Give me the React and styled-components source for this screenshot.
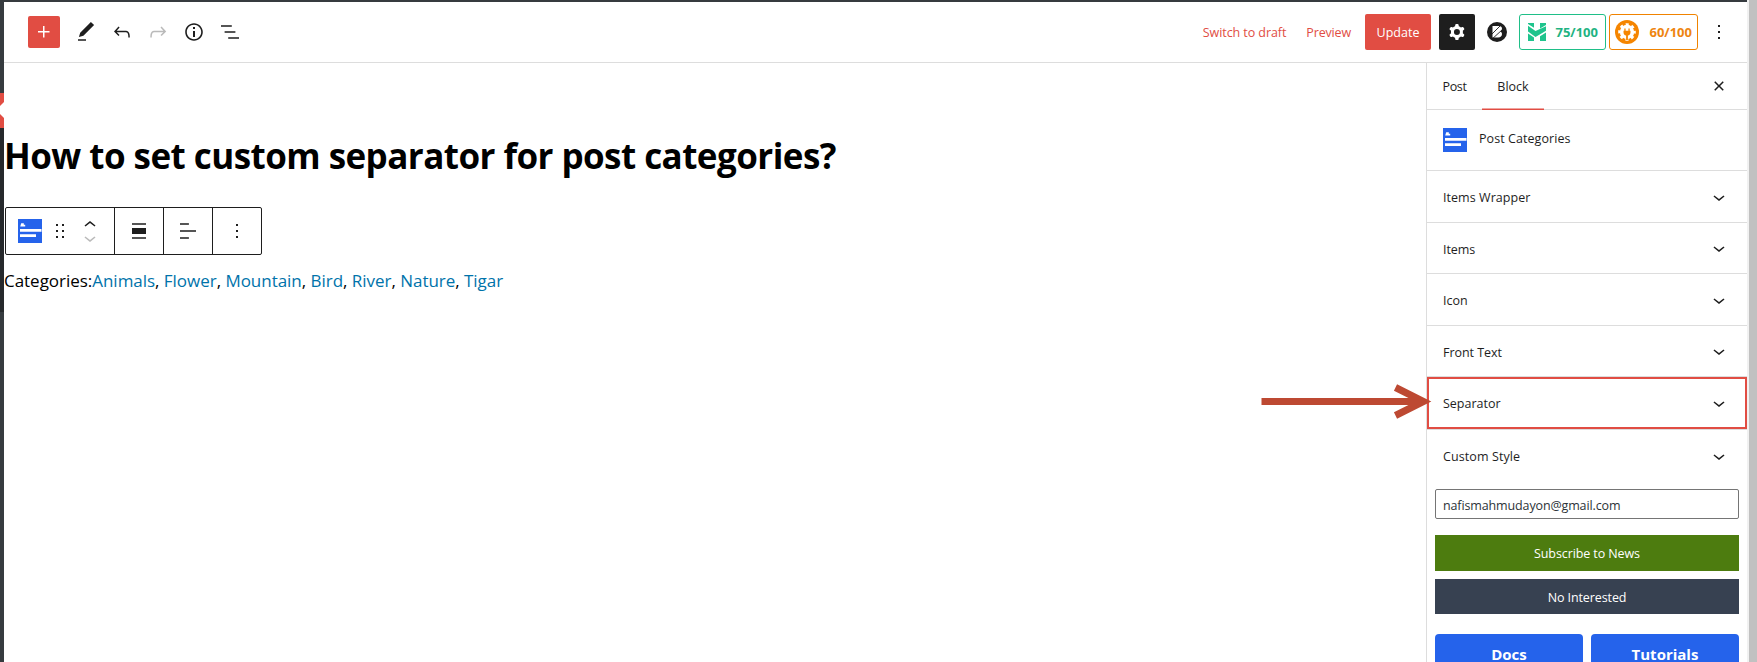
import React from "react";
import styled, { createGlobalStyle } from "styled-components";

const Global = createGlobalStyle`
  *, *::before, *::after { box-sizing: border-box; }
  body {
    margin: 0;
    background: #fff;
    overflow: hidden;
    color: #1e1e1e;
    font-family: "Open Sans", "Noto Sans", sans-serif;
    font-size: 12.5px;
  }
  button { font: inherit; color: inherit; border: 0; margin: 0; padding: 0; background: none; }
`;

const red = "#e14d43";
const line = "#ddd";

const Screen = styled.div`
  display: flex;
  width: 1757px;
  height: 662px;
  overflow: hidden;
`;

const Window = styled.div`
  display: flex;
  flex-direction: column;
  width: 1747px;
`;

const AdminBar = styled.div`
  flex: none;
  height: 2px;
  background: #363b3f;
`;

const Main = styled.div`
  display: flex;
  flex: 1;
  min-height: 0;
`;

const AdminMenu = styled.div`
  display: flex;
  flex-direction: column;
  flex: none;
  width: 4px;
  background: #363b3f;
`;

const MenuCurrent = styled.div`
  margin-top: 91px;
  height: 35px;
  background: ${red};
  svg { display: block; }
`;

const Submenu = styled.div`
  height: 184px;
  background: #26292c;
`;

const Editor = styled.div`
  display: flex;
  flex-direction: column;
  flex: 1;
  min-width: 0;
`;

const Header = styled.header`
  display: flex;
  flex: none;
  justify-content: space-between;
  align-items: center;
  height: 61px;
  padding: 0 16px 0 24px;
  border-bottom: 1px solid ${line};
`;

const Tools = styled.div`
  display: flex;
  align-items: center;
`;

const InsertButton = styled.button`
  display: flex;
  align-items: center;
  justify-content: center;
  width: 32px;
  height: 32px;
  margin-right: 8px;
  border-radius: 2px;
  background: ${red};
  color: #fff;
`;

const ToolButton = styled.button`
  display: flex;
  align-items: center;
  justify-content: center;
  width: 36px;
  height: 36px;
  opacity: ${(p) => (p.disabled ? 0.3 : 1)};
`;

const Icon = styled.svg`
  display: block;
  flex: none;
  width: 24px;
  height: 24px;
  fill: currentColor;
`;

const TextButton = styled.button`
  color: ${red};
  white-space: nowrap;
  margin-right: ${(p) => p.$gap}px;
  letter-spacing: ${(p) => p.$tracking}px;
`;

const UpdateButton = styled.button`
  width: 66px;
  height: 36px;
  margin-right: 8px;
  border-radius: 2px;
  background: ${red};
  color: #fff;
`;

const SettingsButton = styled.button`
  display: flex;
  align-items: center;
  justify-content: center;
  width: 36px;
  height: 36px;
  margin-right: 12px;
  border-radius: 2px;
  background: #1e1e1e;
  color: #fff;
`;

const RoundLogo = styled.svg`
  display: block;
  width: 20px;
  height: 20px;
  margin-right: 12px;
`;

const Score = styled.button`
  display: flex;
  align-items: center;
  justify-content: space-between;
  width: ${(p) => p.$width}px;
  height: 36px;
  margin-right: 3px;
  padding: 0 ${(p) => p.$right}px 0 ${(p) => p.$left}px;
  border: 1px solid ${(p) => p.$color};
  border-radius: 3px;
  color: ${(p) => p.$ink};
  font-size: 13px;
  font-weight: 700;
`;

const ScoreLogo = styled.svg`
  display: block;
  width: ${(p) => p.$size}px;
  height: ${(p) => p.$size}px;
`;

const MoreButton = styled.button`
  margin-left: 6px;
`;

const Body = styled.div`
  display: flex;
  flex: 1;
  min-height: 0;
`;

const Canvas = styled.main`
  flex: 1;
  min-width: 0;
  padding-top: 69px;
`;

const Title = styled.h1`
  margin: 0;
  color: #000;
  font-size: 35px;
  line-height: 48px;
  font-weight: 700;
  letter-spacing: -0.55px;
  white-space: nowrap;
`;

const BlockToolbar = styled.div`
  display: flex;
  width: 257px;
  height: 48px;
  margin: 27px 0 0 1px;
  border: 1px solid #1e1e1e;
  border-radius: 2px;
`;

const ToolGroup = styled.div`
  display: flex;
  align-items: center;
  justify-content: ${(p) => (p.$first ? "flex-start" : "center")};
  width: ${(p) => (p.$first ? 109 : 49)}px;
  padding-left: ${(p) => (p.$first ? 12 : 0)}px;
  border-right: 1px solid #1e1e1e;
  &:last-child { width: 48px; border-right: 0; }
`;

const DragHandle = styled.span`
  margin: 0 6px;
`;

const Movers = styled.div`
  display: flex;
  flex-direction: column;
  svg { height: 14px; }
  svg:last-child { opacity: 0.3; }
`;

const Categories = styled.p`
  margin: 12px 0 0;
  color: #000;
  font-size: 17px;
  line-height: 28px;
  letter-spacing: -0.03px;
  white-space: nowrap;
  a { color: #0073aa; }
`;

const Sidebar = styled.aside`
  display: flex;
  flex-direction: column;
  flex: none;
  width: 321px;
  border-left: 1px solid ${line};
`;

const Tabs = styled.div`
  display: flex;
  flex: none;
  height: 47px;
  border-bottom: 1px solid ${line};
`;

const Tab = styled.button`
  width: ${(p) => p.$width}px;
  height: 47px;
  padding-bottom: 1px;
  letter-spacing: ${(p) => p.$tracking || 0}px;
  font-weight: ${(p) => (p.$active ? 400 : 500)};
  box-shadow: ${(p) => (p.$active ? `inset 0 -1.5px 0 0 ${red}` : "none")};
`;

const CloseButton = styled.button`
  margin: 0 16px 0 auto;
`;

const BlockCard = styled.div`
  display: flex;
  flex: none;
  gap: 12px;
  height: 61px;
  padding: 18px 16px 0;
  border-bottom: 1px solid ${line};
  line-height: 22px;
`;

const Panel = styled.div`
  display: flex;
  flex: none;
  align-items: center;
  justify-content: space-between;
  height: ${(p) => p.$height}px;
  padding: ${(p) => (p.$last ? 0 : 2)}px 16px 0;
  border-bottom: 1px solid ${(p) => (p.$last ? "transparent" : line)};
  svg { margin-top: -2px; }
  ${(p) => p.$marked && `
    padding-top: 0;
    box-shadow: inset 0 0 0 2px ${red};
    svg { margin-top: 0; }
  `}
`;

const PanelTitle = styled.span`
  letter-spacing: ${(p) => p.$tracking || 0}px;
`;

const Promo = styled.div`
  display: flex;
  flex-direction: column;
  padding: 5px 8px 0;
`;

const EmailInput = styled.input`
  width: 304px;
  height: 30px;
  margin: 0 0 16px;
  padding: 2px 7px 0;
  border: 1px solid #757575;
  border-radius: 2px;
  background: #fff;
  color: #2c3338;
  font: inherit;
  letter-spacing: -0.13px;
`;

const WideButton = styled.button`
  height: ${(p) => p.$height}px;
  margin-bottom: ${(p) => p.$gap}px;
  padding-top: ${(p) => p.$drop || 0}px;
  background: ${(p) => p.$color};
  color: #fff;
  letter-spacing: -0.1px;
`;

const Links = styled.div`
  display: grid;
  grid-template-columns: 1fr 1fr;
  gap: 8px;
`;

const LinkButton = styled.button`
  height: 40px;
  border-radius: 4px;
  background: #2563eb;
  color: #fff;
  font-size: 15px;
  line-height: 15px;
  font-weight: 700;
`;

const Scrollbar = styled.div`
  flex: 1;
  border-left: 2px solid #f1f1f1;
  background: #c1c1c1;
`;

const Arrow = styled.svg`
  position: absolute;
  left: 1260px;
  top: 383px;
  width: 172px;
  height: 38px;
`;

const paths = {
  plus: "M11 12.5V17.5H12.5V12.5H17.5V11H12.5V6H11V11H6V12.5H11Z",
  edit: "M20.1 5.1L16.9 2 6.2 12.7l-1.3 4.4 4.5-1.3L20.1 5.1zM4 20.8h8v-1.5H4v1.5z",
  undo: "M18.3 11.7c-.6-.6-1.4-.9-2.3-.9H6.7l2.9-3.3-1.1-1-4.5 5L8.5 16l1-1-2.7-2.7H16c.5 0 .9.2 1.3.5 1 1 1 3.4 1 4.5v.3h1.5v-.2c0-1.5 0-4.3-1.5-5.7z",
  redo: "M15.6 6.5l-1.1 1 2.9 3.3H8c-.9 0-1.7.3-2.3.9-1.4 1.5-1.4 4.2-1.4 5.6v.2h1.5v-.3c0-1.1 0-3.5 1-4.5.3-.3.7-.5 1.3-.5h9.2L14.5 15l1.1 1.1 4.6-4.6-4.6-5z",
  info: "M12 3.2c-4.8 0-8.8 3.9-8.8 8.8 0 4.8 3.9 8.8 8.8 8.8 4.8 0 8.8-3.9 8.8-8.8 0-4.8-4-8.8-8.8-8.8zm0 16c-4 0-7.2-3.3-7.2-7.2C4.8 8 8 4.8 12 4.8s7.2 3.3 7.2 7.2c0 4-3.2 7.2-7.2 7.2zM11 17h2v-6h-2v6zm0-8h2V7h-2v2z",
  list: "M13.8 5.2H3v1.5h10.8V5.2zm-3.6 12v1.5H21v-1.5H10.2zm7.2-6H6.6v1.5h10.8v-1.5z",
  cog: "M10.289 4.836A1 1 0 0111.275 4h1.306a1 1 0 01.987.836l.244 1.466c.787.26 1.503.679 2.108 1.218l1.393-.522a1 1 0 011.216.437l.653 1.13a1 1 0 01-.23 1.273l-1.148.944a6.025 6.025 0 010 2.435l1.149.946a1 1 0 01.23 1.272l-.653 1.13a1 1 0 01-1.216.437l-1.394-.522c-.605.54-1.32.958-2.108 1.218l-.244 1.466a1 1 0 01-.987.836h-1.306a1 1 0 01-.986-.836l-.244-1.466a5.995 5.995 0 01-2.108-1.218l-1.394.522a1 1 0 01-1.217-.436l-.653-1.131a1 1 0 01.23-1.272l1.149-.946a6.026 6.026 0 010-2.435l-1.148-.944a1 1 0 01-.23-1.272l.653-1.131a1 1 0 011.217-.437l1.393.522a5.994 5.994 0 012.108-1.218l.244-1.466zM14.929 12a3 3 0 11-6 0 3 3 0 016 0z",
  more: "M13 19h-2v-2h2v2zm0-6h-2v-2h2v2zm0-6h-2V5h2v2z",
  close: "M12 13.06l3.712 3.713 1.061-1.06L13.061 12l3.712-3.712-1.06-1.06L12 10.938 8.288 7.227l-1.061 1.06L10.939 12l-3.712 3.712 1.06 1.061L12 13.061z",
  down: "M17.5 11.6L12 16l-5.5-4.4.9-1.2L12 14l4.5-3.6 1 1.2z",
  up: "M6.5 12.4L12 8l5.5 4.4-.9 1.2L12 10l-4.5 3.6-1-1.2z",
  drag: "M8 7h2V5H8v2zm0 6h2v-2H8v2zm0 6h2v-2H8v2zm6-14v2h2V5h-2zm0 8h2v-2h-2v2zm0 6h2v-2h-2v2z",
  alignNone: "M5 15h14V9H5v6zm0 4.8h14v-1.5H5v1.5zM5 4.2v1.5h14V4.2H5z",
  alignText: "M4 19.8h8.9v-1.5H4v1.5zm8.9-15.6H4v1.5h8.9V4.2zm-8.9 7v1.5h16v-1.5H4z",
};

const Glyph = ({ name, box = "0 0 24 24" }) => (
  <Icon viewBox={box}>
    <path fillRule="evenodd" d={paths[name]} />
  </Icon>
);

const BlockIcon = () => (
  <Icon viewBox="0 0 24 24">
    <rect width="24" height="24" fill="#2563eb" />
    <path fill="#fff" d="M2 10h21.500v2.800H2zM2 15.200h16V18H2zM3.200 4.300h2.600v1.400h1.400v1.800H2.200z" />
  </Icon>
);

const panels = [
  { title: "Items Wrapper", height: 52, tracking: 0.05 },
  { title: "Items", height: 51, tracking: -0.1 },
  { title: "Icon", height: 52 },
  { title: "Front Text", height: 51, tracking: -0.05 },
  { title: "Separator", height: 53, marked: true },
  { title: "Custom Style", height: 54, tracking: 0.1, last: true },
];

const categories = ["Animals", "Flower", "Mountain", "Bird", "River", "Nature", "Tigar"];

export default function App() {
  return (
    <>
      <Global />
      <Screen>
        <Window>
          <AdminBar />
          <Main>
            <AdminMenu>
              <MenuCurrent>
                <svg width="4" height="35" viewBox="0 0 4 35">
                  <path d="M4 9L0 13v8l4 4z" fill="#fff" />
                </svg>
              </MenuCurrent>
              <Submenu />
            </AdminMenu>
            <Editor>
              <Header>
                <Tools>
                  <InsertButton><Glyph name="plus" /></InsertButton>
                  <ToolButton><Glyph name="edit" /></ToolButton>
                  <ToolButton><Glyph name="undo" /></ToolButton>
                  <ToolButton disabled><Glyph name="redo" /></ToolButton>
                  <ToolButton><Glyph name="info" /></ToolButton>
                  <ToolButton><Glyph name="list" /></ToolButton>
                </Tools>
                <Tools>
                  <TextButton $gap={20} $tracking={-0.08}>Switch to draft</TextButton>
                  <TextButton $gap={14} $tracking={-0.15}>Preview</TextButton>
                  <UpdateButton>Update</UpdateButton>
                  <SettingsButton><Glyph name="cog" /></SettingsButton>
                  <RoundLogo viewBox="0 0 20 20">
                    <circle cx="10" cy="10" r="10" fill="#1e1e1e" />
                    <path d="M5.500 4h6.500c1.900 0 3 1.100 3 2.700 0 1.200-.7 2.200-1.700 2.700 1.100.5 1.700 1.400 1.700 2.600 0 2.100-1.500 3.500-3.800 3.500H5.500z" fill="#fff" />
                    <path d="M4.500 12.500L13 4M6 16.200L15.500 7.500" stroke="#1e1e1e" strokeWidth="0.900" />
                  </RoundLogo>
                  <Score $width={87} $left={8} $right={7} $color="#1fbf88" $ink="#1fb382">
                    <ScoreLogo $size={18} viewBox="0 0 18 18">
                      <path fill="#1fc48d" d="M0 0h6v4.800L0 1zM12 0h6v2L12 5.600zM0 2.800l7.500 5.200L18 3.200v4.600L7.500 14 0 8.600zM0 10.400l6 4.200V18H0zM12 13.200l6-3.600V18h-6z" />
                    </ScoreLogo>
                    75/100
                  </Score>
                  <Score $width={89} $left={5} $right={5} $color="#f08300" $ink="#ee8510">
                    <ScoreLogo $size={24} viewBox="0 0 24 24">
                      <circle cx="12" cy="12" r="12" fill="#f58500" />
                      <circle cx="12" cy="12" r="7.200" fill="#fff" />
                      <circle cx="12" cy="12" r="7.500" fill="none" stroke="#fff" strokeWidth="2.600" strokeDasharray="3 2.890" strokeDashoffset="1.500" />
                      <path fill="#f58500" d="M9.300 8.500h1.300v2.200h2.800V8.500h1.300v2.200h.8v1.500c0 1.900-1 3-2.600 3.400V20h-1.800v-4.400c-1.600-.4-2.600-1.500-2.600-3.400v-1.500h.8z" />
                    </ScoreLogo>
                    60/100
                  </Score>
                  <MoreButton><Glyph name="more" /></MoreButton>
                </Tools>
              </Header>
              <Body>
                <Canvas>
                  <Title>How to set custom separator for post categories?</Title>
                  <BlockToolbar>
                    <ToolGroup $first>
                      <BlockIcon />
                      <DragHandle><Glyph name="drag" /></DragHandle>
                      <Movers>
                        <Glyph name="up" box="0 4 24 14" />
                        <Glyph name="down" box="0 5 24 14" />
                      </Movers>
                    </ToolGroup>
                    <ToolGroup><Glyph name="alignNone" /></ToolGroup>
                    <ToolGroup><Glyph name="alignText" /></ToolGroup>
                    <ToolGroup><Glyph name="more" /></ToolGroup>
                  </BlockToolbar>
                  <Categories>
                    Categories:
                    {categories.map((name, i) => (
                      <React.Fragment key={name}>
                        {i > 0 && ", "}
                        <a>{name}</a>
                      </React.Fragment>
                    ))}
                  </Categories>
                </Canvas>
                <Sidebar>
                  <Tabs>
                    <Tab $width={55} $tracking={-0.35}>Post</Tab>
                    <Tab $width={62} $active>Block</Tab>
                    <CloseButton><Glyph name="close" /></CloseButton>
                  </Tabs>
                  <BlockCard>
                    <BlockIcon />
                    <PanelTitle $tracking={0.07}>Post Categories</PanelTitle>
                  </BlockCard>
                  {panels.map((p) => (
                    <Panel key={p.title} $height={p.height} $marked={p.marked} $last={p.last}>
                      <PanelTitle $tracking={p.tracking}>{p.title}</PanelTitle>
                      <Glyph name="down" />
                    </Panel>
                  ))}
                  <Promo>
                    <EmailInput type="text" defaultValue="nafismahmudayon@gmail.com" />
                    <WideButton $height={36} $gap={8} $color="#4d7c0f">Subscribe to News</WideButton>
                    <WideButton $height={35} $gap={20} $drop={2} $color="#374151">No Interested</WideButton>
                    <Links>
                      <LinkButton>Docs</LinkButton>
                      <LinkButton>Tutorials</LinkButton>
                    </Links>
                  </Promo>
                </Sidebar>
              </Body>
            </Editor>
          </Main>
        </Window>
        <Scrollbar />
      </Screen>
      <Arrow viewBox="0 0 172 38">
        <path d="M1.500 18.500H163M135.500 4.500L163.500 18.500L135.500 32.500" fill="none" stroke="#bd4932" strokeWidth="7" strokeMiterlimit="10" />
      </Arrow>
    </>
  );
}
